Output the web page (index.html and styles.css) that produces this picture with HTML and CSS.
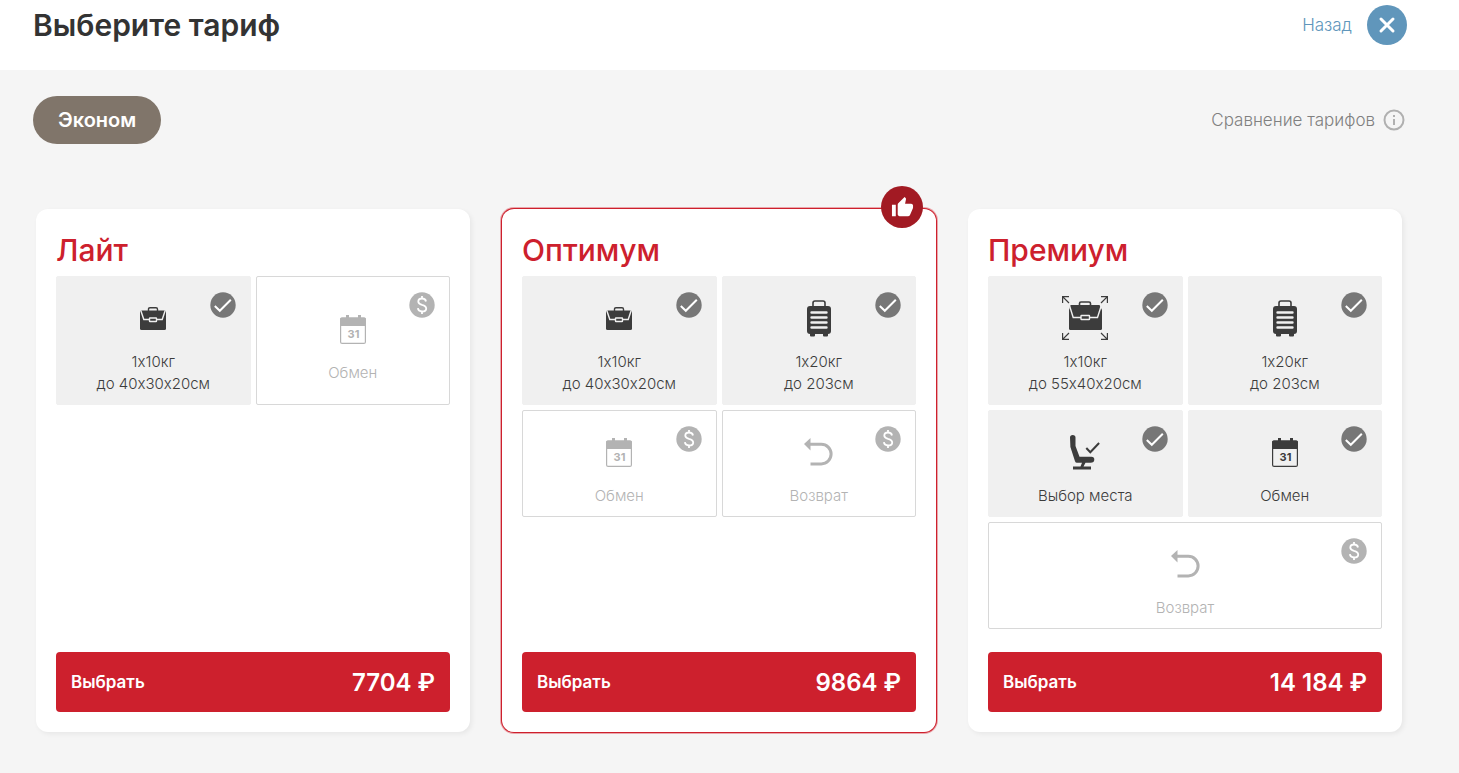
FILE: index.html
```html
<!DOCTYPE html>
<html lang="ru">
  <head>
    <meta charset="UTF-8" />
    <meta name="viewport" content="width=device-width, initial-scale=1.0" />
    <title>Выберите тариф</title>
    <link rel="stylesheet" href="styles.css">
  </head>
  <body>
    <svg class="sprite" aria-hidden="true">
      <symbol id="bag" viewBox="0 0 26 23">
        <path d="M8.5 4V2.3Q8.5 .7 10 .7H16Q17.5 .7 17.5 2.3V4" fill="none" stroke="currentColor" stroke-width="1.4" />
        <rect y="3.5" width="26" height="19.5" rx="1.5" fill="currentColor" />
        <path class="cut" d="M.8 3.5L3.8 12.5H9.5M16.5 12.5H22.2L25.2 3.5" />
        <rect class="cut" x="9.5" y="11" width="7" height="3.5" rx=".5" />
      </symbol>
      <symbol id="bag-large" viewBox="0 0 46 44">
        <path d="M.6 7V.6H7M.6 .6L7 7M39 .6H45.4V7M45.4 .6L39 7M.6 37V43.4H7M.6 43.4L7 37M39 43.4H45.4V37M45.4 43.4L39 37" fill="none" stroke="currentColor" stroke-width="1.2" />
        <path d="M17.5 9V7.5Q17.5 6 19 6H27Q28.5 6 28.5 7.5V9" fill="none" stroke="currentColor" stroke-width="1.6" />
        <path d="M8.5 9H37.5L40 14V32.5Q40 34 38.5 34H8.5Q7 34 7 32.5V14Z" fill="currentColor" />
        <path class="cut" d="M7 8L11.2 21.5H19M27.5 21.5H35.5L39.8 8" />
        <rect class="cut" x="19" y="19.5" width="8.5" height="4" rx=".5" />
      </symbol>
      <symbol id="suitcase" viewBox="0 0 24 37">
        <path d="M6 7V3Q6 1 8 1H16Q18 1 18 3V7" fill="none" stroke="currentColor" stroke-width="1.6" />
        <rect y="6" width="24" height="28" rx="3" fill="currentColor" />
        <path d="M3 33H8V35.5Q8 36.5 7 36.5H4Q3 36.5 3 35.5ZM16 33H21V35.5Q21 36.5 20 36.5H17Q16 36.5 16 35.5Z" fill="currentColor" />
        <path class="slats" d="M4.5 12.5H19.5M4.5 17.5H19.5M4.5 22.5H19.5M4.5 27.5H19.5" />
      </symbol>
      <symbol id="calendar" viewBox="0 0 26 29">
        <path d="M6 0H9V4H6ZM18 0H21V4H18Z" fill="currentColor" />
        <rect x=".6" y="3" width="24.8" height="25.4" rx="1.5" fill="none" stroke="currentColor" stroke-width="1.2" />
        <path d="M0 11V4Q0 2.5 1.5 2.5H24.5Q26 2.5 26 4V11Z" fill="currentColor" />
        <text class="day" x="13.5" y="23" text-anchor="middle" fill="currentColor">31</text>
      </symbol>
      <symbol id="return" viewBox="0 0 29 28">
        <path d="M0 6L6.5 0V12.5Z" fill="currentColor" />
        <path d="M6 6.3H17.3A9.8 9.8 0 0 1 17.3 25.9H6.5" fill="none" stroke="currentColor" stroke-width="3" />
      </symbol>
      <symbol id="seat" viewBox="0 0 30 35">
        <path d="M0 2.5Q0 0 2.7 0 5.5 0 5.5 2.5V11L9.5 21.8H21.5Q24.3 21.8 24.3 24.5 24.3 27.8 20.5 27.8H15.5L13.5 31.5H21V34.5H3V31.5H10.5L12 27.8H7Q5.5 27.8 5 26.2L.4 12Z" fill="currentColor" />
        <path d="M16.3 13L20.3 17.3 29.1 8" fill="none" stroke="currentColor" stroke-width="2" />
      </symbol>
      <symbol id="included" viewBox="0 0 26 26">
        <circle cx="13" cy="13" r="12.7" fill="currentColor" />
        <path d="M4.8 14L9.8 18.8 20.8 7.8" fill="none" stroke="#fff" stroke-width="2" />
      </symbol>
      <symbol id="paid" viewBox="0 0 26 26">
        <circle cx="13" cy="13" r="12.7" fill="currentColor" />
        <path d="M17 9.5Q16.5 6.5 13 6.5 9.3 6.5 9.3 9.5 9.3 11.8 13 12.8 17.2 13.8 17.2 16.5 17.2 19.5 13.2 19.5 9.2 19.5 8.9 16.2M13 4V6.5M13 19.5V22" fill="none" stroke="#fff" stroke-width="1.8" />
      </symbol>
    </svg>

    <header class="header">
      <h1>Выберите тариф</h1>
      <button class="back" type="button">
        Назад
        <span class="close">
          <svg width="40" height="40" viewBox="0 0 40 40" aria-hidden="true">
            <path d="M14 14L26 26M26 14L14 26" stroke="#fff" stroke-width="3" stroke-linecap="round" />
          </svg>
        </span>
      </button>
    </header>

    <div class="toolbar">
      <button class="cabin" type="button">Эконом</button>
      <a class="compare" href="#">
        Сравнение тарифов
        <svg width="22" height="22" viewBox="0 0 22 22" fill="none" aria-hidden="true">
          <circle cx="11" cy="11" r="9.5" stroke="#b0b0b0" stroke-width="2" />
          <path d="M11 10V16M11 6V8" stroke="#b0b0b0" stroke-width="2" />
        </svg>
      </a>
    </div>

    <main class="tariffs">
      <section class="card">
        <h2>Лайт</h2>
        <ul class="options">
          <li class="option">
            <span class="icon"><svg width="26" height="23"><use href="#bag" /></svg></span>
            <span>1x10кг<br>до 40x30x20см</span>
            <svg class="status"><use href="#included" /></svg>
          </li>
          <li class="option paid">
            <span class="icon"><svg width="26" height="29"><use href="#calendar" /></svg></span>
            <span>Обмен</span>
            <svg class="status"><use href="#paid" /></svg>
          </li>
        </ul>
        <button class="choose" type="button">Выбрать <span class="price">7704 ₽</span></button>
      </section>

      <section class="card featured">
        <span class="badge">
          <svg width="23" height="23" viewBox="0 0 24 24" aria-hidden="true">
            <path fill="#fff" d="M1 21h4V9H1v12zm22-11c0-1.1-.9-2-2-2h-6.31l.95-4.57.03-.32c0-.41-.17-.79-.44-1.06L14.17 1 7.59 7.59C7.22 7.95 7 8.45 7 9v10c0 1.1.9 2 2 2h9c.83 0 1.54-.5 1.84-1.22l3.02-7.05c.09-.23.14-.47.14-.73v-2z" />
          </svg>
        </span>
        <h2>Оптимум</h2>
        <ul class="options">
          <li class="option">
            <span class="icon"><svg width="26" height="23"><use href="#bag" /></svg></span>
            <span>1x10кг<br>до 40x30x20см</span>
            <svg class="status"><use href="#included" /></svg>
          </li>
          <li class="option">
            <span class="icon"><svg width="24" height="37"><use href="#suitcase" /></svg></span>
            <span>1x20кг<br>до 203см</span>
            <svg class="status"><use href="#included" /></svg>
          </li>
          <li class="option paid">
            <span class="icon"><svg width="26" height="29"><use href="#calendar" /></svg></span>
            <span>Обмен</span>
            <svg class="status"><use href="#paid" /></svg>
          </li>
          <li class="option paid">
            <span class="icon"><svg width="29" height="28"><use href="#return" /></svg></span>
            <span>Возврат</span>
            <svg class="status"><use href="#paid" /></svg>
          </li>
        </ul>
        <button class="choose" type="button">Выбрать <span class="price">9864 ₽</span></button>
      </section>

      <section class="card">
        <h2>Премиум</h2>
        <ul class="options">
          <li class="option">
            <span class="icon"><svg width="46" height="44"><use href="#bag-large" /></svg></span>
            <span>1x10кг<br>до 55x40x20см</span>
            <svg class="status"><use href="#included" /></svg>
          </li>
          <li class="option">
            <span class="icon"><svg width="24" height="37"><use href="#suitcase" /></svg></span>
            <span>1x20кг<br>до 203см</span>
            <svg class="status"><use href="#included" /></svg>
          </li>
          <li class="option">
            <span class="icon"><svg width="30" height="35"><use href="#seat" /></svg></span>
            <span>Выбор места</span>
            <svg class="status"><use href="#included" /></svg>
          </li>
          <li class="option">
            <span class="icon"><svg width="26" height="29"><use href="#calendar" /></svg></span>
            <span>Обмен</span>
            <svg class="status"><use href="#included" /></svg>
          </li>
          <li class="option paid wide">
            <span class="icon"><svg width="29" height="28"><use href="#return" /></svg></span>
            <span>Возврат</span>
            <svg class="status"><use href="#paid" /></svg>
          </li>
        </ul>
        <button class="choose" type="button">Выбрать <span class="price">14 184 ₽</span></button>
      </section>
    </main>
  </body>
</html>
```
FILE: styles.css
```css
* {
  box-sizing: border-box;
}
body {
  margin: 0;
  background-color: #f5f5f5;
  font-family: Inter, "Liberation Sans", sans-serif;
  color: #333;
}
button {
  border: 0;
  font-family: inherit;
  cursor: pointer;
}
h1,
h2 {
  margin: 0;
  font-size: 30px;
}
.sprite {
  display: none;
}
.header {
  display: flex;
  justify-content: space-between;
  align-items: center;
  padding: 5px 52px 25px 33px;
  background-color: #fff;
}
h1 {
  font-weight: 600;
  line-height: 40px;
}
.back {
  display: flex;
  align-items: center;
  gap: 15px;
  padding: 0;
  background: none;
  color: #6096bb;
  font-size: 17px;
  font-weight: 300;
}
.close {
  display: block;
  height: 40px;
  border-radius: 50%;
  background-color: #6096bb;
}
.toolbar {
  display: flex;
  justify-content: space-between;
  align-items: center;
  padding: 26px 54px 65px 33px;
}
.cabin {
  height: 48px;
  padding: 0 25px;
  border-radius: 24px;
  background-color: #80756a;
  color: #fff;
  font-size: 20px;
  font-weight: 600;
}
.compare {
  display: flex;
  align-items: center;
  gap: 8px;
  color: #808080;
  font-size: 17px;
  font-weight: 300;
  text-decoration: none;
}
.tariffs {
  display: grid;
  grid-template-columns: repeat(3, 1fr);
  gap: 32px;
  padding: 0 57px 40px 36px;
}
.card {
  position: relative;
  display: flex;
  flex-direction: column;
  padding: 20px;
  border-radius: 12px;
  background-color: #fff;
  box-shadow: 2px 2px 5px rgba(0, 0, 0, 0.06);
}
.featured {
  box-shadow: 0 0 0 1px #cd202d, 0 0 0 2px #eaa6ab;
}
.badge {
  position: absolute;
  top: -23px;
  right: 13px;
  display: flex;
  align-items: center;
  justify-content: center;
  width: 42px;
  height: 42px;
  border-radius: 50%;
  background-color: #a21a23;
}
h2 {
  margin-bottom: 5px;
  color: #cd202d;
  font-weight: 500;
  line-height: 42px;
}
.options {
  display: grid;
  grid-template-columns: 1fr 1fr;
  gap: 5px;
  margin: 0 0 23px;
  padding: 0;
  list-style: none;
}
.option {
  position: relative;
  display: flex;
  flex-direction: column;
  align-items: center;
  justify-content: center;
  gap: 10px;
  padding: 18px 10px 9px;
  border: 1px solid #f0f0f0;
  border-radius: 2px;
  background-color: #f0f0f0;
  color: #3c3c3c;
  font-size: 15px;
  font-weight: 300;
  line-height: 22px;
  text-align: center;
  /* keeps Inter from turning 1x10 into 1×10 */
  font-variant-ligatures: no-contextual;
}
.paid {
  border-color: #d8d8d8;
  background-color: #fff;
  color: #b3b3b3;
}
.wide {
  grid-column: span 2;
}
.icon {
  display: flex;
  align-items: center;
  height: 46px;
}
.day {
  font-size: 11px;
  font-weight: 700;
}
.cut,
.slats {
  fill: none;
  stroke: #f0f0f0;
  stroke-width: 1.4;
}
.slats {
  stroke-width: 2.4;
  stroke-linecap: round;
}
.status {
  position: absolute;
  top: 15px;
  right: 14px;
  width: 26px;
  height: 26px;
  color: #777;
}
.paid .status {
  color: #b3b3b3;
}
.choose {
  display: flex;
  justify-content: space-between;
  align-items: center;
  height: 60px;
  margin-top: auto;
  padding: 0 15px;
  border-radius: 4px;
  background-color: #cd202d;
  color: #fff;
  font-size: 17px;
  font-weight: 600;
}
.price {
  font-size: 24px;
}
```
